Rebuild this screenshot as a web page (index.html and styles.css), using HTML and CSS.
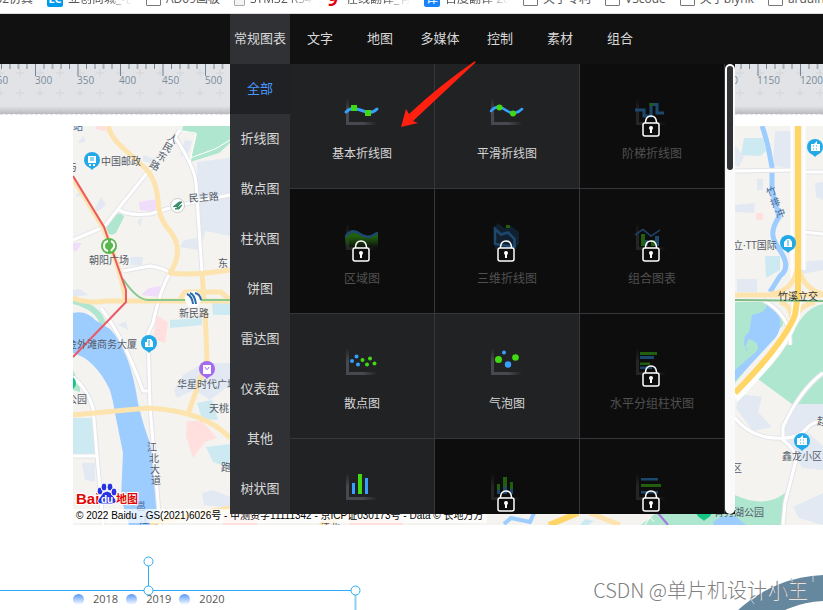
FILE: index.html
```html
<!DOCTYPE html>
<html lang="zh-CN">
<head>
<meta charset="utf-8">
<title>常规图表</title>
<link rel="stylesheet" href="styles.css">
</head>
<body>
<nav class="bookmarks">
  <div class="bookmark-row">
    <a class="bookmark bookmark-cut" href="#">32仿真</a>
    <a class="bookmark" href="#"><span class="site-icon site-lc">LC</span><span class="fade">立创商城_电</span></a>
    <a class="bookmark" href="#"><span class="page-icon"></span>AD09画板</a>
    <a class="bookmark" href="#"><span class="page-icon page-small"></span><span class="fade">STM32 RS4</span></a>
    <a class="bookmark" href="#"><span class="site-red">9</span><span class="fade">在线翻译_有</span></a>
    <a class="bookmark" href="#"><span class="site-icon">译</span><span class="fade">百度翻译 20</span></a>
    <a class="bookmark" href="#"><span class="page-icon"></span>关于专利</a>
    <a class="bookmark" href="#"><span class="page-icon"></span>VScode</a>
    <a class="bookmark" href="#"><span class="page-icon"></span>关于blynk</a>
    <a class="bookmark" href="#"><span class="page-icon"></span>arduino</a>
  </div>
</nav>
<header class="toolbar">
  <button class="tab tab-active">常规图表</button>
  <button class="tab">文字</button>
  <button class="tab">地图</button>
  <button class="tab">多媒体</button>
  <button class="tab">控制</button>
  <button class="tab">素材</button>
  <button class="tab">组合</button>
</header>
<main class="workspace">
  <svg class="ruler" aria-hidden="true">
    <defs>
      <pattern id="ticks" x="35" width="85" height="14" patternUnits="userSpaceOnUse">
        <path d="M.5 0v12M9 0v5M26 0v5M34.500 0v5M51.500 0v5M60 0v5M77 0v5" stroke="#70859a"/>
        <path d="M17.500 0v5M68.500 0v5" stroke="#a6afba" stroke-width="2"/>
        <path d="M43 0v12" stroke="#a6afba" stroke-width="2"/>
      </pattern>
      <pattern id="plus" x="10" y="-1" width="20" height="20" patternUnits="userSpaceOnUse">
        <path d="M6 10h8M10 6v8" stroke="#d3d5d9"/>
      </pattern>
      <linearGradient id="edge" x2="0" y2="1"><stop offset="0" stop-color="#b9bbbf" stop-opacity="0"/><stop offset="1" stop-color="#b9bbbf"/></linearGradient>
    </defs>
    <rect width="100%" height="50" fill="#e1e3e6"/>
    <rect width="100%" height="50" fill="url(#plus)"/>
    <rect y="42" width="100%" height="8" fill="url(#edge)"/>
    <rect width="100%" height="14" fill="url(#ticks)"/>
    <g class="ruler-text">
      <text x="-9" y="20">250</text><text x="35" y="20">300</text><text x="77" y="20">350</text><text x="119" y="20">400</text><text x="162" y="20">450</text><text x="205" y="20">500</text><text x="715" y="20">1100</text><text x="757" y="20">1150</text><text x="800" y="20">1200</text>
    </g>
  </svg>
  <section class="canvas">
    <div class="map">
      <svg class="map-drawing" viewBox="73 126 750 399" preserveAspectRatio="xMinYMin slice">
        <defs>
          <g id="pin"><path d="M-4 6L0 10L4 6Z"/><circle r="8"/></g>
          <path id="streets" d="M73 240L104 227L118 209L147 173L180 130M118 209Q126 216 150 214L173 207L194 202L230 195M175 137Q195 168 196 183L202 272M123 271L150 266Q164 268 170 273Q160 290 153 323L148 333L150 407L160 525M73 377Q88 390 93 408L103 525M73 456H96M101 308Q125 340 143 391H150M735 171L792 170M804 172H823M803 232L823 234M735 418Q753 440 783 438Q800 438 808 427Q816 420 823 423M823 373Q800 390 783 427V440Q797 451 796 460L785 503L783 525M763 300Q792 316 790 345"/>
        </defs>
        <rect x="73" y="126" width="750" height="399" fill="#f4f3ef"/>
        <g fill="#e2e9f3">
          <path d="M197 162L230 158V236L206 231L199 250L180 247L184 240L198 238ZM78 142L84 136L85 142L80 143ZM93 212L101 197L106 205L98 211ZM137 222L142 217L141 227ZM180 157L185 140L192 141L189 152ZM143 155L158 160L155 164L143 161ZM75 197L83 188L83 195ZM183 375L204 363L230 363V385L210 400L194 390L177 398L174 390ZM82 463H95V482L85 480ZM202 493L213 490L230 497V508L204 505ZM118 325L126 321L128 330ZM130 257L143 257L142 265H131ZM73 290L80 289L88 295L73 297Z"/>
          <path d="M775 131H794V168L773 166ZM735 145L744 157L739 167L735 165ZM757 179H763V190H757ZM735 205L755 203L754 213L735 212ZM815 183L823 182V200L816 197ZM737 279H757V292H737ZM802 262L823 260V270L802 274ZM740 394L762 397L758 412L772 427L753 431L736 408ZM792 404H823V423L805 430L823 446V470L802 468L783 432ZM793 507L823 493V525L799 518Z"/>
        </g>
        <g fill="#f0ddfb"><path d="M139 202L157 199L155 212L140 210ZM149 288L160 286V297L141 295ZM73 243L82 243L76 252L73 250Z"/></g>
        <g fill="#ffe0df"><path d="M157 315L168 323L165 343L153 339ZM187 421H202L217 438L205 442L193 458L186 436ZM96 126H105L107 132L96 129ZM756 213H763V220H756ZM223 513H257V525H223ZM350 519H403V525H350Z"/></g>
        <g fill="#cdeaf3"><path d="M73 418H93L95 456H73ZM170 320L202 318V325L170 328ZM197 403L212 400L218 420L202 419ZM206 447L230 444V468L213 462ZM212 303H230V315H213ZM744 138H763L766 151L760 156L741 155ZM765 256H780V270L766 278ZM580 525L585 519L594 521L588 525Z"/></g>
        <g fill="#afe6cf">
          <path d="M183 126H230V143L219 153L190 162L197 134L182 131ZM113 215Q122 211 124 217L116 233Q108 238 106 228ZM73 370L80 384V392L73 390Z"/>
          <path d="M735 302H766Q785 311 783 325L735 383ZM823 304Q804 308 793 333Q782 357 758 379L792 404H823ZM735 495Q765 509 785 493L784 525H641L656 513H735Z"/>
          <path d="M73 301Q98 307 103 324" fill="none" stroke="#afe6cf" stroke-width="6"/>
        </g>
        <g fill="#9dccff">
          <path d="M73 313Q86 310 95 320L110 329Q130 350 138 403Q143 425 150 443Q157 480 162 525H129L121 498L123 453L115 413Q113 400 110 390Q95 359 73 353Z"/>
          <path d="M752 315Q768 312 766 304L779 313Q782 329 776 337L753 362L735 381V370L757 351Q761 343 749 339Q742 350 748 351L744 345Q744 333 749 333Z"/>
          <path d="M713 522Q725 513 736 517L746 525H714Z"/>
          <path d="M762 126C769 145 769 153 772 167V190L779 217C767 235 775 242 781 252Q791 268 780 276L770 292" fill="none" stroke="#9dccff" stroke-width="5"/>
          <path d="M504 524L511 518L530 522L534 513" fill="none" stroke="#9dccff" stroke-width="4"/>
        </g>
        <use href="#streets" fill="none" stroke="#e3e4e8" stroke-width="5"/>
        <use href="#streets" fill="none" stroke="#fff" stroke-width="3"/>
        <path d="M792 126V280M804 126V270" fill="none" stroke="#fff" stroke-width="3"/>
        <path d="M182 131L196 133L190 163M190 158L215 149L230 140M645 525L650 517L654 522" fill="none" stroke="#fff"/>
        <g fill="none" stroke="#fde3ad" stroke-width="5" stroke-linejoin="round">
          <path d="M108 126Q112 139 122 147L147 170Q156 180 158 200Q158 218 170 231Q185 250 170 273Q190 276 230 270M202 273L204 300M73 298Q88 304 106 301H230M180 299L185 292H221L229 299M73 178L104 229Q124 280 125 300M73 415L148 408Q205 411 230 438M205 310L207 360L188 414M150 523L230 508"/>
          <path d="M735 295H823M797 270Q792 292 770 294M799 270Q805 290 823 294M780 302Q792 306 792 320M815 302Q798 306 794 320M590 513L620 525M320 525L350 513"/>
        </g>
        <path d="M798 293L795 317Q784 348 735 398" fill="none" stroke="#fff" stroke-width="9"/>
        <path d="M798 126V293L795 315Q784 343 735 393M549 525L578 513" fill="none" stroke="#ffd666" stroke-width="6"/>
        <path d="M123 279Q137 300 148 300H230" fill="none" stroke="#87c98e" stroke-width="2"/>
        <path d="M735 300L823 301" stroke="#7dbd85" stroke-width="2"/>
        <path d="M73 176L104 227L126 290V302L73 357" fill="none" stroke="#ea5a67" stroke-width="2"/>
        <path d="M658 513L668 525" stroke="#a774df" stroke-width="2"/>
        <g fill="#22a9e8"><use href="#pin" x="92" y="160"/><use href="#pin" x="149" y="343"/><use href="#pin" x="815" y="147"/><use href="#pin" x="788" y="243"/><use href="#pin" x="802" y="441"/></g>
        <use href="#pin" x="207" y="369" fill="#a36af0"/><use href="#pin" x="704" y="511" fill="#16c784"/>
        <circle cx="69" cy="383" r="7" fill="#16c784"/>
        <g fill="#fff">
          <path d="M88 156H96V163H88ZM89 164H91V166H89ZM93 164H95V166H93ZM145 347V342H147V339H151L153 342V347ZM811 151V144H814L817 141V144H820V151ZM784 247V242L787 239H790L792 242V247ZM797 445V438H800L803 435V438H807V445ZM203 365H211V374H203Z"/>
        </g>
        <path d="M90 158H94M90 160H94M149 340V346M813 146H814M816 146H817M813 149H814M816 149H817M788 240V246M800 440H801M803 440H804M800 443H801M803 443H804" stroke="#22a9e8"/>
        <path d="M205 367Q207 372 209 367" fill="none" stroke="#a36af0"/>
        <circle cx="109" cy="246" r="8" fill="#59b84d"/><g fill="none" stroke="#fff" stroke-width="2"><path d="M108 241Q104 242 104 246T108 251M111 241Q115 243 114 247L111 251"/></g>
        <circle cx="177.500" cy="205.500" r="7" fill="#fff" stroke="#c8cec9"/><path d="M173 207L179 202H182L177 207M175 209L182 205L179 209Z" fill="#388e69" stroke="#388e69"/>
        <circle cx="193" cy="299" r="8" fill="#fff"/><path d="M187 294Q192 296 193 304M190 293Q195 295 196 304M195 293Q200 294 201 300" fill="none" stroke="#2c6cae" stroke-width="2"/>
        <g class="map-text">
          <text x="73" y="130" class="blue-text">站</text><text x="67" y="171">与</text>
          <text x="101" y="165">中国邮政</text><text x="189" y="202" transform="rotate(-4 189 202)">民主路</text>
          <text x="168" y="142" transform="rotate(28 173 138)">人</text><text x="163" y="151" transform="rotate(28 168 147)">民</text><text x="157" y="160" transform="rotate(28 162 156)">东</text><text x="150" y="169" transform="rotate(28 155 165)">路</text>
          <text x="89" y="264">朝阳广场</text><text x="218" y="267">东</text><text x="179" y="317">新民路</text>
          <text x="67" y="348">金外滩商务大厦</text><text x="177" y="388">华星时代广场</text><text x="209" y="412">天桃</text><text x="67" y="403">公园</text><text x="221" y="471">跑</text>
          <text x="147" y="451">江</text><text x="149" y="462">北</text><text x="150" y="473">大</text><text x="151" y="484">道</text><text x="136" y="510" class="river-text">邕</text><text x="139" y="524" class="river-text">江</text>
          <text x="766" y="195" class="river-text" transform="rotate(-20 771 191)">竹</text><text x="770" y="206" class="river-text" transform="rotate(-20 775 202)">排</text><text x="775" y="217" class="river-text" transform="rotate(-20 780 213)">冲</text>
          <text x="733" y="249">立·TT国际</text><text x="778" y="300" class="dark-text">竹溪立交</text><text x="782" y="460">鑫龙小区</text><text x="732" y="472">区</text><text x="817" y="425">赵</text><text x="714" y="516">青秀湖公园</text><text x="320" y="531">江北</text>
        </g>
        <g class="logo-text"><text x="76" y="504">Bai</text><text x="116" y="503" class="logo-map">地图</text></g>
        <g fill="#2932e1" stroke="#fff" stroke-width="1"><path d="M107 491Q111 491 114 497Q119 503 112 504H101Q95 503 100 497Q103 491 107 491Z"/><ellipse cx="100" cy="491" rx="3" ry="4"/><ellipse cx="104" cy="487" rx="3" ry="4"/><ellipse cx="110" cy="487" rx="3" ry="4"/><ellipse cx="114" cy="492" rx="3" ry="4"/></g>
        <text x="101" y="503" class="logo-du">du</text>
      </svg>
      <p class="copyright">© 2022 Baidu - GS(2021)6026号 - 甲测资字11111342 - 京ICP证030173号 - Data © 长地万方</p>
    </div>
    <div class="line-chart">
      <svg class="handles" viewBox="0 0 362 60" aria-hidden="true"><g fill="#fff" stroke="#29abf5" stroke-width="1"><path d="M0 34.500H355M148.500 5V35"/><path d="M355.500 34V60" stroke="#8fd0f7" stroke-width="2"/><circle cx="148.500" cy="5.500" r="4.500"/><circle cx="148.500" cy="34.500" r="4.500"/><circle cx="355.500" cy="34.500" r="4.500"/></g></svg>
      <ul class="legend"><li>2018</li><li>2019</li><li>2020</li></ul>
    </div>
    <svg class="gauge" viewBox="0 0 93 40" aria-hidden="true"><circle cx="98" cy="138" r="120" fill="none" stroke="#66889f" stroke-width="26"/><path d="M20 28L24 34M42 15L45 23M61 8L63 14M83 6V12" stroke="#b9c9d4"/></svg>
    <p class="watermark">CSDN @单片机设计小王</p>
  </section>
  <div class="menu">
    <div class="categories">
      <button class="category category-active">全部</button><button class="category">折线图</button><button class="category">散点图</button><button class="category">柱状图</button><button class="category">饼图</button><button class="category">雷达图</button><button class="category">仪表盘</button><button class="category">其他</button><button class="category">树状图</button>
    </div>
    <svg class="symbols" aria-hidden="true">
      <linearGradient id="fadeUp" x1="0" y1="1" x2="0" y2="0"><stop offset=".5" stop-color="#484950"/><stop offset="1" stop-color="#484950" stop-opacity="0"/></linearGradient>
      <linearGradient id="fadeSide"><stop offset=".5" stop-color="#484950"/><stop offset="1" stop-color="#484950" stop-opacity="0"/></linearGradient>
      <linearGradient id="area" x2="0" y2="1"><stop offset=".3" stop-color="#41d911"/><stop offset="1" stop-color="#41d911" stop-opacity="0"/></linearGradient>
      <symbol id="axis" viewBox="0 0 40 30"><path d="M4 1H7V28H4Z" fill="url(#fadeUp)"/><path d="M7 25H35V28H7Z" fill="url(#fadeSide)"/></symbol>
      <symbol id="lock" viewBox="0 0 18 22"><path d="M3.500 8V7Q4 1 9 1T14.500 7V8" fill="none" stroke="#fff" stroke-width="1.500"/><rect x="1" y="8" width="16" height="13" rx="2" fill="#0d0d0d" stroke="#fff" stroke-width="1.500"/><circle cx="9" cy="13" r="2" fill="#fff"/><path d="M9 13V18" stroke="#fff" stroke-width="2"/></symbol>
    </svg>
    <div class="tiles">
      <button class="tile"><span class="picture"><svg class="icon"><use href="#axis"/><path d="M4 15Q8 11 12 11.500T26 15.500Q31 16 35 12" fill="none" stroke="#36a0ff" stroke-width="3" stroke-linecap="round"/><path d="M9 8H15V14H9ZM23 13H29V19H23Z" fill="#41d911"/></svg></span>基本折线图</button>
      <button class="tile"><span class="picture"><svg class="icon"><use href="#axis"/><path d="M4 14Q10 7 17 12T28 16Q32 15 35 12" fill="none" stroke="#36a0ff" stroke-width="2.500" stroke-linecap="round"/><g fill="#41d911"><circle cx="12.500" cy="10.500" r="3"/><circle cx="26" cy="16.500" r="3"/></g></svg></span>平滑折线图</button>
      <button class="tile locked"><span class="picture"><svg class="icon"><use href="#axis"/><path d="M3 13H12V19H19V7.500H25V16H32" fill="none" stroke="#36a0ff" stroke-width="3"/><path d="M17.500 6H21V9H17.500Z" fill="#41d911"/></svg><svg class="lock"><use href="#lock"/></svg></span>阶梯折线图</button>
      <button class="tile locked"><span class="picture"><svg class="icon"><use href="#axis"/><path d="M3 14Q10 6 18 12T36 11V26H3Z" fill="url(#area)"/><path d="M4 14Q10 6 18 12T35 11" fill="none" stroke="#36a0ff" stroke-width="2.500" stroke-linecap="round"/></svg><svg class="lock"><use href="#lock"/></svg></span>区域图</button>
      <button class="tile locked"><span class="picture"><svg class="icon"><path d="M7 5L11 1L17 6L24 4L32 10V22L27 27H8Z" fill="#173d60"/><path d="M8 7L14 12.500L21 10.500L27.500 17V25L8 22Z" fill="#173d60" stroke="#36a0ff" stroke-width="2.500"/><path d="M19 3H23V6H19Z" fill="#41d911"/></svg><svg class="lock"><use href="#lock"/></svg></span>三维折线图</button>
      <button class="tile locked"><span class="picture"><svg class="icon"><use href="#axis"/><path d="M3 13L11 7.500L19 14L28 8" fill="none" stroke="#36a0ff" stroke-width="1.500"/><path d="M9 12H13V24H9ZM19 18H23V24H19Z" fill="#41d911"/><path d="M13 18H16V24H13ZM23 14H27V24H23Z" fill="#36a0ff"/></svg><svg class="lock"><use href="#lock"/></svg></span>组合图表</button>
      <button class="tile"><span class="picture"><svg class="icon"><use href="#axis"/><g fill="#36a0ff"><circle cx="10" cy="14" r="2"/><circle cx="14.500" cy="9.500" r="2"/><circle cx="16" cy="17.500" r="2"/></g><g fill="#41d911"><circle cx="20.500" cy="13" r="2"/><circle cx="28" cy="11.500" r="2"/><circle cx="25" cy="17.500" r="2"/><circle cx="32.500" cy="16.500" r="2"/></g></svg></span>散点图</button>
      <button class="tile"><span class="picture"><svg class="icon"><use href="#axis"/><g fill="#36a0ff"><circle cx="17" cy="5.500" r="2"/><circle cx="21" cy="17.500" r="3.200"/></g><g fill="#41d911"><circle cx="11.500" cy="12.500" r="3.500"/><circle cx="28.500" cy="10.500" r="3.300"/></g></svg></span>气泡图</button>
      <button class="tile locked"><span class="picture"><svg class="icon"><use href="#axis"/><path d="M8 5H25V8H8ZM8 15.500H18V18H8Z" fill="#41d911"/><path d="M8 9H22V12H8ZM8 19.500H20V22H8Z" fill="#36a0ff"/></svg><svg class="lock"><use href="#lock"/></svg></span>水平分组柱状图</button>
      <button class="tile"><span class="picture"><svg class="icon"><use href="#axis"/><path d="M10 11H13V22H10ZM23 6H26V22H23Z" fill="#36a0ff"/><path d="M16 2H20V22H16Z" fill="#41d911"/></svg></span></button>
      <button class="tile locked"><span class="picture"><svg class="icon"><use href="#axis"/><path d="M10 12H13V18H10ZM16 5H20V15H16ZM23 10H26V17H23Z" fill="#41d911"/><path d="M10 18H13V22H10ZM16 15H20V22H16ZM23 17H26V22H23Z" fill="#36a0ff"/></svg><svg class="lock"><use href="#lock"/></svg></span></button>
      <button class="tile locked"><span class="picture"><svg class="icon"><use href="#axis"/><path d="M9 6H26V8.500H9ZM9 19H26V21.500H9Z" fill="#36a0ff"/><path d="M9 12H29V15H9Z" fill="#41d911"/></svg><svg class="lock"><use href="#lock"/></svg></span></button>
    </div>
    <div class="scrollbar"><div class="thumb"></div></div>
    <svg class="arrow" viewBox="0 0 76 67" aria-hidden="true"><path d="M75 0Q76 1 75 2L13 60L18 62L1 66L6 48L9 53Q40 24 75 0Z" fill="#ff2010"/></svg>
  </div>
</main>
</body>
</html>
```

FILE: styles.css
```css
* { box-sizing: border-box; }
body {
  margin: 0;
  height: 100vh;
  display: flex;
  flex-direction: column;
  overflow: hidden;
  background: #fff;
  font-family: "Open Sans", "Noto Sans CJK SC", sans-serif;
  font-size: 12px;
}
button {
  border: 0;
  padding: 0;
  background: none;
  color: inherit;
  font: inherit;
}
p, ul { margin: 0; padding: 0; }

.bookmarks {
  flex: none;
  height: 14px;
  overflow: hidden;
  display: flex;
  align-items: flex-end;
  border-bottom: 1px solid #dcdcdc;
}
.bookmark-row {
  display: flex;
  gap: 14px;
  height: 28px;
}
.bookmark {
  flex: none;
  display: flex;
  align-items: center;
  gap: 5px;
  color: #555;
  line-height: 16px;
  text-decoration: none;
  white-space: nowrap;
}
.bookmark-cut {
  width: 33px;
  justify-content: flex-end;
}
.fade {
  width: 64px;
  overflow: hidden;
  mask-image: linear-gradient(to right, #000 60%, transparent);
}
.site-icon {
  width: 16px;
  height: 16px;
  border-radius: 2px;
  background: #1683fb;
  color: #fff;
  text-align: center;
}
.site-lc { background: #0099ee; font-weight: bold; font-size: 11px; }
.site-red { width: 13px; color: #e60012; font-size: 18px; font-weight: bold; font-style: italic; }
.page-icon { width: 15px; height: 14px; border: 1px solid #777; border-radius: 1px; }
.page-small { width: 11px; border-color: #aaa; background: #f4f4f4; }

.toolbar {
  flex: none;
  display: flex;
  height: 50px;
  padding-left: 230px;
  background: #111;
  color: #d8d8d8;
}
.tab {
  width: 60px;
  font-size: 13px;
  padding-bottom: 4px;
  white-space: nowrap;
}
.tab-active { background: #303135; }

.workspace {
  position: relative;
  flex: 1;
  display: flex;
  flex-direction: column;
  min-height: 0;
}
.ruler { flex: none; display: block; width: 100%; height: 50px; }
.ruler-text { fill: #7b8c9c; font-size: 10px; }
.canvas {
  position: relative;
  flex: 1;
  min-height: 0;
  padding-top: 11px;
  overflow: hidden;
  border-top: 1px dashed #e2e2e2;
}
.map { position: relative; margin-left: 73px; }
.map-drawing { display: block; width: 100%; height: 399px; }
.map-text { fill: #535a68; font-size: 10px; }
.map-text .blue-text, .map-text .river-text { fill: #45699b; }
.map-text .dark-text { fill: #333; }
.logo-text {
  fill: #e10602;
  stroke: #fff;
  stroke-width: 2px;
  paint-order: stroke;
  font-family: "Liberation Sans", "Noto Sans CJK SC", sans-serif;
  font-size: 15px;
  font-weight: bold;
}
.logo-text .logo-map { font-size: 11px; }
.logo-du { fill: #fff; font-family: "Liberation Sans", sans-serif; font-size: 10px; font-weight: bold; }
.copyright {
  position: absolute;
  left: 0;
  bottom: 2px;
  padding: 0 3px;
  background: rgba(255, 255, 255, .7);
  color: #000;
  font-family: "Liberation Sans", "Noto Sans CJK SC", sans-serif;
  font-size: 10px;
  line-height: 14px;
  white-space: nowrap;
}
.line-chart { position: relative; width: 362px; padding: 67px 0 0 73px; }
.handles { position: absolute; left: 0; top: 31px; width: 362px; height: 60px; }
.legend {
  position: relative;
  display: flex;
  gap: 8px;
  list-style: none;
  color: #555;
  font-size: 11px;
  line-height: 14px;
}
.legend li { display: flex; align-items: center; gap: 9px; }
.legend li::before {
  content: "";
  width: 11px;
  height: 11px;
  border-radius: 50%;
  background: linear-gradient(#5799f8, #fff);
}
.gauge { position: absolute; right: 0; bottom: 0; width: 93px; height: 40px; }
.watermark {
  position: absolute;
  right: 16px;
  bottom: 6px;
  color: #808080;
  font-family: "Noto Sans CJK SC", sans-serif;
  font-size: 20px;
  font-weight: 300;
  line-height: 28px;
  text-shadow: 1px 1px 0 rgba(255, 255, 255, .8);
  white-space: nowrap;
}

.menu {
  position: absolute;
  left: 230px;
  top: 0;
  display: flex;
  height: 450px;
  background: #0d0d0d;
}
.categories { width: 60px; overflow: hidden; background: #303135; color: #d8d8d8; }
.category { display: block; width: 100%; height: 50px; font-size: 13px; padding-bottom: 4px; }
.category-active { background: #202124; color: #4798ff; }
.symbols { position: absolute; width: 0; height: 0; }
.tiles {
  display: grid;
  grid-template-columns: repeat(3, 145px);
  grid-auto-rows: 125px;
  overflow: hidden;
}
.tile {
  display: flex;
  flex-direction: column;
  align-items: center;
  gap: 18px;
  padding-top: 33px;
  border-right: 1px solid #36373b;
  border-bottom: 1px solid #36373b;
  background: #202224;
  color: #d6d6d6;
  line-height: 18px;
}
.locked { background: #0d0d0d; color: #505050; }
.picture { position: relative; width: 40px; height: 30px; }
.icon { display: block; width: 40px; height: 30px; }
.locked .icon { opacity: .4; }
.lock { position: absolute; left: 10px; top: 18px; width: 18px; height: 22px; }
.scrollbar { width: 10px; padding: 2px; border-radius: 5px; background: #fafafa; }
.thumb { height: 104px; border-radius: 3px; background: #303135; }
.arrow { position: absolute; left: 170px; top: -3px; width: 76px; height: 67px; }
```
